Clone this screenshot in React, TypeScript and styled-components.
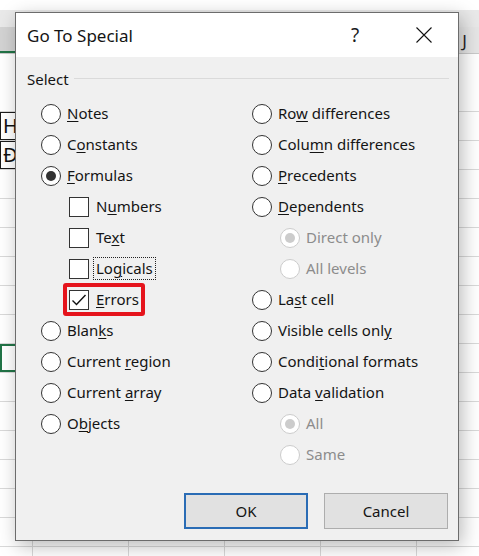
import React from "react";
import styled, { createGlobalStyle, css } from "styled-components";

const GlobalStyle = createGlobalStyle`
  html, body {
    margin: 0;
    padding: 0;
  }
  body {
    width: 479px;
    height: 556px;
    overflow: hidden;
    background: #fff;
    font-family: "Noto Sans", "Segoe UI", sans-serif;
  }
`;

/* ---------- spreadsheet behind the dialog ---------- */

const Sheet = styled.div`
  position: relative;
  width: 479px;
  height: 556px;
  overflow: hidden;
  background: #fff;
  padding-top: 10px;
  box-sizing: border-box;
`;

const TopStrip = styled.div`
  height: 17px;
  background: #e9e9e9;
`;

const HeaderRow = styled.div`
  display: flex;
  height: 26px;
  background: #e6e6e6;
  border-bottom: 1px solid #c9c9c9;
`;

const HeaderCell = styled.div<{ $w: number; $selected?: boolean }>`
  flex: 0 0 ${(p) => p.$w}px;
  box-sizing: border-box;
  display: flex;
  align-items: center;
  justify-content: center;
  font-size: 17px;
  color: #262626;
  border-right: 1px solid #cfcfcf;
  ${(p) =>
    p.$selected &&
    css`
      background: #d3d3d3;
      box-shadow: inset 0 -2px 0 #217346;
    `}
`;

const GridRow = styled.div<{ $h: number }>`
  display: flex;
  height: ${(p) => p.$h}px;
  box-sizing: border-box;
  border-bottom: 1px solid #d9d9d9;
`;

const Cell = styled.div<{ $w: number; $kind?: "boxed" | "active" }>`
  flex: 0 0 ${(p) => p.$w}px;
  box-sizing: border-box;
  border-right: 1px solid #d9d9d9;
  padding-left: 3px;
  font-size: 20px;
  line-height: 28px;
  color: #111;
  ${(p) =>
    p.$kind === "boxed" &&
    css`
      box-shadow: inset 1px 1px 0 #1a1a1a, inset 0 -1px 0 #1a1a1a;
    `}
  ${(p) =>
    p.$kind === "active" &&
    css`
      box-shadow: inset 0 0 0 2px #217346;
    `}
`;

/* ---------- dialog ---------- */

const Dialog = styled.div`
  position: absolute;
  left: 15px;
  top: 12px;
  width: 444px;
  height: 529px;
  box-sizing: border-box;
  border: 1px solid #6c6c6c;
  background: #f0f0f0;
  box-shadow: 3px 5px 18px rgba(0, 0, 0, 0.28);
  display: flex;
  flex-direction: column;
  color: #141414;
`;

const TitleBar = styled.div`
  height: 44px;
  flex: 0 0 44px;
  background: #fff;
  display: flex;
  align-items: center;
  padding: 0 11px;
`;

const Title = styled.div`
  font-size: 17px;
  flex: 1;
`;

const TitleButton = styled.div`
  width: 46px;
  height: 32px;
  display: flex;
  align-items: center;
  justify-content: center;
  font-size: 19px;
  color: #1a1a1a;
  & + & {
    margin-left: 23px;
  }
`;

const Body = styled.div`
  flex: 1;
  display: flex;
  flex-direction: column;
  padding: 0 9px 11px 11px;
`;

const GroupHeader = styled.div`
  display: flex;
  align-items: center;
  gap: 5px;
  height: 41px;
  font-size: 15px;
  padding-top: 2px;
  box-sizing: border-box;
`;

const GroupLine = styled.div`
  flex: 1;
  height: 1px;
  background: #dadada;
  margin-top: -1px;
`;

const Columns = styled.div`
  display: grid;
  grid-template-columns: 211px 1fr;
  padding-left: 14px;
`;

const Column = styled.div`
  display: flex;
  flex-direction: column;
`;

const Row = styled.div<{ $indent?: boolean }>`
  height: 31px;
  display: flex;
  align-items: center;
  padding-left: ${(p) => (p.$indent ? 28 : 0)}px;
`;

const Item = styled.div<{ $highlight?: boolean; $gap: number }>`
  position: relative;
  display: inline-flex;
  align-items: center;
  gap: ${(p) => p.$gap}px;
  ${(p) =>
    p.$highlight &&
    css`
      &::after {
        content: "";
        position: absolute;
        left: -6px;
        top: -6px;
        right: -6px;
        bottom: -6px;
        border: 4px solid #e5141c;
        border-radius: 3px;
        box-sizing: border-box;
        pointer-events: none;
      }
    `}
`;

const Radio = styled.span<{ $checked?: boolean; $disabled?: boolean }>`
  width: 20px;
  height: 20px;
  flex: 0 0 20px;
  box-sizing: border-box;
  border-radius: 50%;
  background: #fff;
  border: 1px solid ${(p) => (p.$disabled ? "#cccccc" : "#333")};
  display: flex;
  align-items: center;
  justify-content: center;
  &::after {
    content: "";
    display: ${(p) => (p.$checked ? "block" : "none")};
    width: 10px;
    height: 10px;
    border-radius: 50%;
    background: ${(p) => (p.$disabled ? "#cccccc" : "#333")};
  }
`;

const Box = styled.span`
  width: 20px;
  height: 20px;
  flex: 0 0 20px;
  box-sizing: border-box;
  background: #fff;
  border: 1px solid #333;
  display: flex;
  align-items: center;
  justify-content: center;
`;

const Label = styled.span<{ $disabled?: boolean; $focused?: boolean }>`
  font-size: 15px;
  line-height: 21px;
  color: ${(p) => (p.$disabled ? "#8c8c8c" : "#141414")};
  white-space: nowrap;
  padding: 0 2px;
  margin: 0 -2px;
  outline: ${(p) => (p.$focused ? "1px dotted #222" : "none")};
  u {
    text-decoration-thickness: 1px;
    text-underline-offset: 2px;
  }
`;

const ButtonRow = styled.div`
  margin-top: auto;
  display: flex;
  justify-content: flex-end;
  gap: 16px;
  padding-right: 1px;
`;

const Button = styled.div<{ $default?: boolean }>`
  width: 124px;
  height: 36px;
  box-sizing: border-box;
  background: #e1e1e1;
  border: ${(p) => (p.$default ? "2px solid #2a6cb5" : "1px solid #adadad")};
  display: flex;
  align-items: center;
  justify-content: center;
  font-size: 15px;
`;

type Opt = {
  label: string;
  acc?: number;
  kind?: "radio" | "check";
  checked?: boolean;
  disabled?: boolean;
  indent?: boolean;
  focused?: boolean;
  highlight?: boolean;
};

const leftOpts: Opt[] = [
  { label: "Notes", acc: 0 },
  { label: "Constants", acc: 1 },
  { label: "Formulas", acc: 0, checked: true },
  { label: "Numbers", acc: 1, kind: "check", indent: true },
  { label: "Text", acc: 2, kind: "check", indent: true },
  { label: "Logicals", acc: 2, kind: "check", indent: true, focused: true },
  { label: "Errors", acc: 0, kind: "check", indent: true, checked: true, highlight: true },
  { label: "Blanks", acc: 4 },
  { label: "Current region", acc: 8 },
  { label: "Current array", acc: 8 },
  { label: "Objects", acc: 1 },
];

const rightOpts: Opt[] = [
  { label: "Row differences", acc: 2 },
  { label: "Column differences", acc: 4 },
  { label: "Precedents", acc: 0 },
  { label: "Dependents", acc: 0 },
  { label: "Direct only", indent: true, disabled: true, checked: true },
  { label: "All levels", indent: true, disabled: true },
  { label: "Last cell", acc: 2 },
  { label: "Visible cells only", acc: 17 },
  { label: "Conditional formats", acc: 5 },
  { label: "Data validation", acc: 5 },
  { label: "All", indent: true, disabled: true, checked: true },
  { label: "Same", indent: true, disabled: true },
];

const Accel = ({ text, acc }: { text: string; acc?: number }) => {
  if (acc === undefined) return <>{text}</>;
  return (
    <>
      {text.slice(0, acc)}
      <u>{text[acc]}</u>
      {text.slice(acc + 1)}
    </>
  );
};

const CheckMark = () => (
  <svg width="16" height="16" viewBox="0 0 16 16">
    <path d="M1.5 8.5 L5.5 12.5 L14.5 3" fill="none" stroke="#111" strokeWidth="1.4" />
  </svg>
);

const Option = ({ o }: { o: Opt }) => (
  <Row $indent={o.indent}>
    <Item $highlight={o.highlight} $gap={o.kind === "check" ? 7 : 6}>
      {o.kind === "check" ? (
        <Box>{o.checked && <CheckMark />}</Box>
      ) : (
        <Radio $checked={o.checked} $disabled={o.disabled} />
      )}
      <Label $disabled={o.disabled} $focused={o.focused}>
        <Accel text={o.label} acc={o.acc} />
      </Label>
    </Item>
  </Row>
);

const colWidths = [33, 96, 96, 96, 96, 96];
const rowHeights = [58, ...Array(16).fill(29)];

const cellContent = (r: number, c: number): { text?: string; kind?: "boxed" | "active" } => {
  if (c !== 0) return {};
  if (r === 1) return { text: "H", kind: "boxed" };
  if (r === 2) return { text: "Đ", kind: "boxed" };
  if (r === 9) return { kind: "active" };
  return {};
};

const App = () => (
  <>
    <GlobalStyle />
    <Sheet>
      <TopStrip />
      <HeaderRow>
        {colWidths.map((w, i) => (
          <HeaderCell key={i} $w={w} $selected={i === 0}>
            {i === 5 ? "J" : ""}
          </HeaderCell>
        ))}
      </HeaderRow>
      {rowHeights.map((h, r) => (
        <GridRow key={r} $h={h}>
          {colWidths.map((w, c) => {
            const cc = cellContent(r, c);
            return (
              <Cell key={c} $w={w} $kind={cc.kind}>
                {cc.text}
              </Cell>
            );
          })}
        </GridRow>
      ))}

      <Dialog>
        <TitleBar>
          <Title>Go To Special</Title>
          <TitleButton>?</TitleButton>
          <TitleButton>
            <svg width="16" height="16" viewBox="0 0 16 16">
              <path d="M0.5 0.5 L15.5 15.5 M15.5 0.5 L0.5 15.5" stroke="#111" strokeWidth="1.1" />
            </svg>
          </TitleButton>
        </TitleBar>
        <Body>
          <GroupHeader>
            <span>Select</span>
            <GroupLine />
          </GroupHeader>
          <Columns>
            <Column>
              {leftOpts.map((o) => (
                <Option key={o.label} o={o} />
              ))}
            </Column>
            <Column>
              {rightOpts.map((o) => (
                <Option key={o.label} o={o} />
              ))}
            </Column>
          </Columns>
          <ButtonRow>
            <Button $default>OK</Button>
            <Button>Cancel</Button>
          </ButtonRow>
        </Body>
      </Dialog>
    </Sheet>
  </>
);

export default App;
